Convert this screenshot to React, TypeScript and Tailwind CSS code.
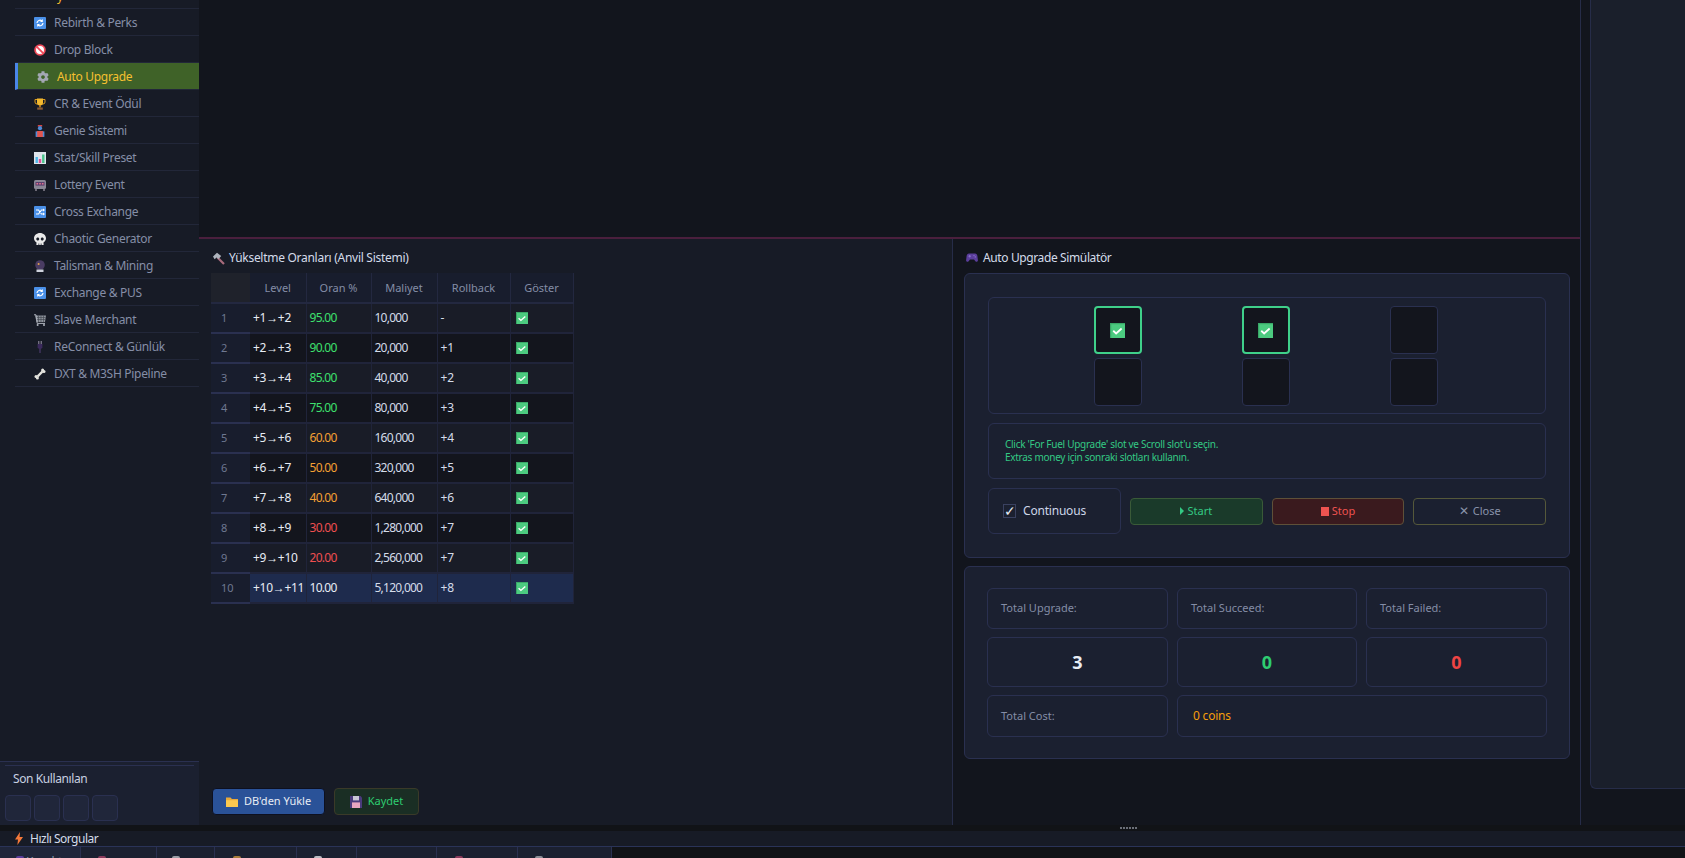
import React from 'react'
import { FaCog, FaSkull } from 'react-icons/fa'

type IconProps = { className?: string }

const CheckBox = ({ className = 'h-3 w-3' }: IconProps) => (
  <svg viewBox="0 0 12 12" className={className}>
    <rect width="12" height="12" fill="#4ccb80" />
    <path d="M0 0h12v1H1v11H0z" fill="#3aa868" />
    <path d="M2.6 6.2l2.3 2.2 4.4-4" fill="none" stroke="#fff" strokeWidth="1.4" />
  </svg>
)

const BlueArrows = () => (
  <svg viewBox="0 0 12 12" className="h-3 w-3">
    <rect width="12" height="12" rx="1" fill="#4a90e8" />
    <path d="M3 6a3 3 0 0 1 5-2M9 6a3 3 0 0 1-5 2" fill="none" stroke="#fff" strokeWidth="1.2" />
    <path d="M8.8 2v3H6zM3.2 10V7H6z" fill="#fff" />
  </svg>
)

const Shuffle = () => (
  <svg viewBox="0 0 12 12" className="h-3 w-3">
    <rect width="12" height="12" rx="1" fill="#4a90e8" />
    <path d="M2 4h2.5l3 4H9M2 8h2.5l3-4H9" fill="none" stroke="#fff" strokeWidth="1.1" />
    <path d="M9 2.5L11 4 9 5.5zM9 6.5L11 8 9 9.5z" fill="#fff" />
  </svg>
)

const NoEntry = () => (
  <svg viewBox="0 0 12 12" className="h-3 w-3">
    <circle cx="6" cy="6" r="4.9" fill="#fff" stroke="#ef4a5a" strokeWidth="1.8" />
    <path d="M2.6 2.6l6.8 6.8" stroke="#ef4a5a" strokeWidth="1.8" />
  </svg>
)

const Trophy = () => (
  <svg viewBox="0 0 12 12" className="h-3 w-3">
    <path d="M1 1.5h10V4a2 2 0 0 1-2 2H3a2 2 0 0 1-2-2z" fill="none" stroke="#d99a1e" strokeWidth="1" />
    <path d="M3 .5h6v4a3 3 0 0 1-6 0z" fill="#f3b92f" />
    <rect x="5.2" y="7" width="1.6" height="2.5" fill="#c98a1e" />
    <rect x="3.2" y="9.5" width="5.6" height="2.2" fill="#8a5a34" />
  </svg>
)

const Genie = () => (
  <svg viewBox="0 0 12 12" className="h-3 w-3">
    <rect x="3.8" y="0" width="4.4" height="1.6" fill="#d8433f" />
    <circle cx="6" cy="3.2" r="2.1" fill="#4f8bd8" />
    <path d="M3 6h6l1 6H2z" fill="#e0544e" />
    <rect x="1.6" y="6.4" width="1.6" height="5.4" fill="#4f8bd8" />
    <rect x="8.8" y="6.4" width="1.6" height="5.4" fill="#4f8bd8" />
  </svg>
)

const Stats = () => (
  <svg viewBox="0 0 12 12" className="h-3 w-3">
    <rect width="12" height="12" fill="#dfe4ec" />
    <rect x="1.5" y="5" width="2.4" height="6" fill="#4fb7e8" />
    <rect x="4.8" y="7" width="2.4" height="4" fill="#e0509a" />
    <rect x="8.1" y="2.5" width="2.4" height="8.5" fill="#49c48a" />
  </svg>
)

const Slots = () => (
  <svg viewBox="0 0 12 12" className="h-3 w-3">
    <rect y="1" width="12" height="9" rx="1.5" fill="#8a8796" />
    <rect x="1.5" y="3" width="9" height="3.6" fill="#5a3f6e" />
    <path d="M2.5 4h1.6v1.4H2.5zM5.2 4h1.6v1.4H5.2zM7.9 4h1.6v1.4H7.9z" fill="#e3738f" />
    <rect x="1" y="10" width="2" height="2" fill="#6b6875" />
    <rect x="9" y="10" width="2" height="2" fill="#6b6875" />
  </svg>
)

const Ball = () => (
  <svg viewBox="0 0 12 12" className="h-3 w-3">
    <circle cx="6" cy="5" r="4.8" fill="#4a3c63" />
    <circle cx="4.6" cy="4" r="1" fill="#e3a34a" />
    <path d="M2.5 9.5h7V12h-7z" fill="#cfd3dc" />
  </svg>
)

const Cart = () => (
  <svg viewBox="0 0 13 12" className="h-3 w-[13px]">
    <path d="M1 1.5h11l-1 6.5H2.5z" fill="#8d929b" />
    <path d="M1.5 3.5h10M2 5.5h9M4.5 1.5v6.5M7 1.5v6.5M9.5 1.5v6.5" stroke="#3b3f4a" strokeWidth=".6" />
    <path d="M0 .8h2l1.2 8.6H11" fill="none" stroke="#aeb3bc" strokeWidth="1" />
    <circle cx="3.6" cy="11" r="1" fill="#aeb3bc" />
    <circle cx="10" cy="11" r="1" fill="#aeb3bc" />
  </svg>
)

const Plug = () => (
  <svg viewBox="0 0 12 12" className="h-3 w-3">
    <rect x="4.3" y="0" width="1" height="3" fill="#9a93a8" />
    <rect x="6.7" y="0" width="1" height="3" fill="#9a93a8" />
    <path d="M3.6 3h4.8v3.4L7 8H5L3.6 6.4z" fill="#3b2a5c" />
    <rect x="5.4" y="8" width="1.2" height="4" fill="#4a3a6b" />
  </svg>
)

const Bone = () => (
  <svg viewBox="0 0 12 12" className="h-3 w-3">
    <path d="M3.4 8.6l5.2-5.2" stroke="#e4e4de" strokeWidth="2.2" />
    <circle cx="2" cy="8.6" r="1.5" fill="#e4e4de" />
    <circle cx="3.4" cy="10" r="1.5" fill="#e4e4de" />
    <circle cx="8.6" cy="2" r="1.5" fill="#e4e4de" />
    <circle cx="10" cy="3.4" r="1.5" fill="#e4e4de" />
  </svg>
)

const Hammer = () => (
  <svg viewBox="0 0 13 13" className="h-[13px] w-[13px]">
    <path d="M5.5 5.5l6.5 6.5" stroke="#a86b7c" strokeWidth="2.2" />
    <path d="M1 4.5L5 .8l4.2 3.2-2.6 3-2-1.4-2 1.6z" fill="#aeb4bd" />
  </svg>
)

const Gamepad = () => (
  <svg viewBox="0 0 12 10" className="h-[10px] w-3">
    <path d="M3 .5h6c1.4 0 2.1.9 2.4 2.4l.5 4.3c.1 1.6-1.5 2.2-2.5 1L8 6.4H4L2.6 8.2c-1 1.2-2.6.6-2.5-1l.5-4.3C.9 1.4 1.6.5 3 .5z" fill="#5b3e9c" />
    <path d="M2.4 3.2h2.6M3.7 2v2.5" stroke="#8f78cf" strokeWidth=".8" />
    <circle cx="8" cy="2.6" r=".7" fill="#8f78cf" />
    <circle cx="9.3" cy="3.9" r=".7" fill="#8f78cf" />
  </svg>
)

const Folder = () => (
  <svg viewBox="0 0 12 12" className="h-3 w-3">
    <path d="M0 1.5h4.5L6 3h6v8H0z" fill="#e8a93a" />
    <path d="M0 4.2h12V11H0z" fill="#fcc94f" />
  </svg>
)

const Floppy = () => (
  <svg viewBox="0 0 12 12" className="h-3 w-3">
    <path d="M0 0h10.5L12 1.5V12H0z" fill="#4a3a7c" />
    <rect x="3" y="0" width="6" height="4.4" fill="#c9c6d6" />
    <rect x="2" y="6.4" width="8" height="5.6" fill="#e8a5c0" />
  </svg>
)

const Bolt = () => (
  <svg viewBox="0 0 8 13" className="h-[13px] w-2">
    <path d="M5 0L0 7.4h3L2.4 13 8 5H4.6z" fill="#f5793a" />
  </svg>
)

const navItems: { label: string; icon: React.ReactNode }[] = [
  { label: 'Rebirth & Perks', icon: <BlueArrows /> },
  { label: 'Drop Block', icon: <NoEntry /> },
  { label: 'Auto Upgrade', icon: <FaCog className="h-3 w-3 text-[#a3a7b2]" /> },
  { label: 'CR & Event Ödül', icon: <Trophy /> },
  { label: 'Genie Sistemi', icon: <Genie /> },
  { label: 'Stat/Skill Preset', icon: <Stats /> },
  { label: 'Lottery Event', icon: <Slots /> },
  { label: 'Cross Exchange', icon: <Shuffle /> },
  { label: 'Chaotic Generator', icon: <FaSkull className="h-3 w-3 text-[#e9e9e9]" /> },
  { label: 'Talisman & Mining', icon: <Ball /> },
  { label: 'Exchange & PUS', icon: <BlueArrows /> },
  { label: 'Slave Merchant', icon: <Cart /> },
  { label: 'ReConnect & Günlük', icon: <Plug /> },
  { label: 'DXT & M3SH Pipeline', icon: <Bone /> },
]

const rows = [
  { level: '+1→+2', rate: 95, cost: '10,000', back: '-' },
  { level: '+2→+3', rate: 90, cost: '20,000', back: '+1' },
  { level: '+3→+4', rate: 85, cost: '40,000', back: '+2' },
  { level: '+4→+5', rate: 75, cost: '80,000', back: '+3' },
  { level: '+5→+6', rate: 60, cost: '160,000', back: '+4' },
  { level: '+6→+7', rate: 50, cost: '320,000', back: '+5' },
  { level: '+7→+8', rate: 40, cost: '640,000', back: '+6' },
  { level: '+8→+9', rate: 30, cost: '1,280,000', back: '+7' },
  { level: '+9→+10', rate: 20, cost: '2,560,000', back: '+7' },
  { level: '+10→+11', rate: 10, cost: '5,120,000', back: '+8' },
]

const tabs = [
  { cls: 'w-[81px] pl-[16px] bg-[#20263a]', icon: 'bg-[#5b3e9c]', text: 'Karakter' },
  { cls: 'w-[76px] pl-[17px]', icon: 'bg-[#8a3a5c]', text: '' },
  { cls: 'w-[58px] pl-[15px]', icon: 'bg-[#9a9da6]', text: '' },
  { cls: 'w-[82px] pl-[18px]', icon: 'bg-[#a87c3a]', text: '' },
  { cls: 'w-[60px] pl-[17px]', icon: 'bg-[#b9bbc2]', text: '' },
  { cls: 'w-[80px] pl-[17px]', icon: 'bg-transparent', text: '' },
  { cls: 'w-[81px] pl-[18px]', icon: 'bg-[#8a3a5c]', text: '' },
  { cls: 'w-[94px] pl-[17px]', icon: 'bg-[#8a8d96]', text: '' },
]

function rateColor(rate: number) {
  if (rate >= 70) return 'text-[#3ee06e]'
  if (rate >= 40) return 'text-[#f5a033]'
  if (rate >= 20) return 'text-[#ef4f50]'
  return 'text-[#e8edf5]'
}

const Sidebar = () => (
  <aside className="flex w-[199px] shrink-0 flex-col bg-[#171b26]">
    <div className="ml-[15px] flex h-[9px] items-end overflow-hidden border-b border-[#222739] pb-[5px]">
      <span className="ml-[5px] h-[2px] w-[13px] self-start -translate-y-[5px] bg-[#3f2a6e]" />
      <span className="ml-[24px] text-xs leading-[12px] text-[#f5b82e]">y</span>
    </div>
    <nav className="flex-1">
      {navItems.map(item => {
        const active = item.label === 'Auto Upgrade'
        return (
          <div
            key={item.label}
            className={`ml-[15px] flex h-[27px] items-center border-b border-[#222739] pt-[2px] text-xs tracking-[-0.3px] ${
              active
                ? 'border-l-[3px] border-l-[#4a86e8] bg-[#3f6228] pl-[19px] text-[#f5c030]'
                : 'pl-[19px] text-[#858ea6]'
            }`}
          >
            <span className="flex w-[20px] shrink-0 items-center">{item.icon}</span>
            {item.label}
          </div>
        )
      })}
    </nav>
    <div className="h-[64px] border-t border-[#2a3050] bg-[#1b2030] pt-[3px]">
      <div className="mx-[5px] border-t border-[#2a3050]" />
      <div className="mt-[4px] pl-[13px] text-xs leading-[18px] tracking-[-0.4px] text-[#c8d0e0]">Son Kullanılan</div>
      <div className="mt-[7px] flex gap-[3px] pl-[5px]">
        {[0, 1, 2, 3].map(i => (
          <div key={i} className="h-[26px] w-[26px] rounded border border-[#2a3050] bg-[#20263a]" />
        ))}
      </div>
    </div>
  </aside>
)

const RateTable = () => {
  const th = 'border-r border-b-2 border-[#232840] bg-[#181d2d] pt-[2px] text-center text-[11px] font-normal text-[#848da6]'
  const td = 'border-r border-b-2 border-[#20243a] pl-[3px] text-xs'
  return (
    <table className="w-[362px] table-fixed border-collapse">
      <colgroup>
        <col className="w-[39px]" />
        <col className="w-[56px]" />
        <col className="w-[65px]" />
        <col className="w-[66px]" />
        <col className="w-[73px]" />
        <col className="w-[63px]" />
      </colgroup>
      <thead>
        <tr className="h-[30px]">
          <th className="border-b-2 border-[#232840] bg-[#1f222b]" />
          {['Level', 'Oran %', 'Maliyet', 'Rollback', 'Göster'].map(h => (
            <th key={h} className={th}>{h}</th>
          ))}
        </tr>
      </thead>
      <tbody>
        {rows.map((r, i) => {
          const selected = i === rows.length - 1
          const bg = selected ? 'bg-[#1e2b4d]' : i % 2 === 0 ? 'bg-[#191c27]' : 'bg-[#13151d]'
          return (
            <tr key={r.level} className={`h-[30px] ${bg}`}>
              <td className="border-b-2 border-[#2a3050] bg-[#181d2d] pl-[10px] text-[11px] text-[#6f7891]">{i + 1}</td>
              <td className={`${td} tracking-[-0.3px] text-[#e8edf5]`}>{r.level}</td>
              <td className={`${td} tracking-[-0.7px] ${rateColor(r.rate)}`}>{r.rate.toFixed(2)}</td>
              <td className={`${td} tracking-[-0.75px] text-[#d4dcea]`}>{r.cost}</td>
              <td className={`${td} text-[#d4dcea]`}>{r.back}</td>
              <td className={`${td} pl-[5px]`}><CheckBox /></td>
            </tr>
          )
        })}
      </tbody>
    </table>
  )
}

const Slot = ({ on }: { on?: boolean }) => (
  <div
    className={`flex h-[48px] w-[48px] items-center justify-center rounded bg-[#13151d] ${
      on ? 'border-2 border-[#3fd08a]' : 'border border-[#2a3050]'
    }`}
  >
    {on && <CheckBox className="h-[15px] w-[15px]" />}
  </div>
)

const Stat = ({ className = '', children }: { className?: string; children: React.ReactNode }) => (
  <div className={`flex items-center rounded-md border border-[#2a3050] ${className}`}>{children}</div>
)

const Simulator = () => (
  <section className="flex flex-1 flex-col border-l border-[#262c48] bg-[#12151d] px-[11px]">
    <h2 className="flex h-[34px] items-center gap-[5px] pt-[4px] pl-[2px] text-xs font-normal tracking-[-0.38px] text-[#d4dcea]">
      <Gamepad />
      Auto Upgrade Simülatör
    </h2>

    <div className="flex h-[285px] flex-col gap-[9px] rounded-md border border-[#2a3050] bg-[#1b2030] px-[23px] pt-[23px]">
      <div className="grid h-[117px] grid-cols-[148px_148px_148px] grid-rows-[48px_48px] justify-center justify-items-center gap-y-[4px] rounded-md border border-[#2a3050] pt-[8px] pr-[3px]">
        <Slot on />
        <Slot on />
        <Slot />
        <Slot />
        <Slot />
        <Slot />
      </div>
      <div className="flex h-[56px] flex-col justify-center rounded-md border border-[#2a3050] pl-[16px] text-[10px] leading-[13px] tracking-[-0.28px] text-[#34c984]">
        <div>Click 'For Fuel Upgrade' slot ve Scroll slot'u seçin.</div>
        <div>Extras money için sonraki slotları kullanın.</div>
      </div>
      <div className="flex h-[46px] items-center gap-[9px]">
        <label className="flex h-[46px] w-[133px] shrink-0 items-center gap-[7px] rounded-md border border-[#2a3050] pl-[14px] text-xs tracking-[-0.2px] text-[#cdd6e8]">
          <span className="flex h-[14px] w-[13px] items-center justify-center border border-[#3a4160] text-sm leading-none text-[#e8edf5]">✓</span>
          Continuous
        </label>
        <button className="flex h-[27px] flex-1 items-center justify-center gap-[3px] rounded border border-[#3a5a38] bg-[#1a3a2a] text-[11px] text-[#34c984]">
          <span className="h-0 w-0 border-y-[4px] border-l-[4px] border-y-transparent border-l-[#34c984]" />
          Start
        </button>
        <button className="flex h-[27px] flex-1 items-center justify-center gap-[3px] rounded border border-[#5e5038] bg-[#3a1a1e] text-[11px] text-[#ef5350]">
          <span className="h-[9px] w-[8px] bg-[#ef5350]" />
          Stop
        </button>
        <button className="flex h-[27px] flex-1 items-center justify-center gap-[4px] rounded border border-[#55583a] bg-[#1b2030] text-[11px] text-[#8a93ab]">
          <span className="text-xs leading-none">✕</span>
          Close
        </button>
      </div>
    </div>

    <div className="mt-[8px] grid h-[193px] grid-cols-[181px_180px_181px] grid-rows-[41px_50px_42px] gap-x-[9px] gap-y-[8px] rounded-md border border-[#2a3050] bg-[#1b2030] px-[22px] pt-[21px]">
      <Stat className="pl-[13px] text-[11px] text-[#848da6]">Total Upgrade:</Stat>
      <Stat className="pl-[13px] text-[11px] text-[#848da6]">Total Succeed:</Stat>
      <Stat className="pl-[13px] text-[11px] text-[#848da6]">Total Failed:</Stat>
      <Stat className="justify-center text-lg font-bold text-[#e8edf5]">3</Stat>
      <Stat className="justify-center text-lg font-bold text-[#2ecc71]">0</Stat>
      <Stat className="justify-center text-lg font-bold text-[#ef4444]">0</Stat>
      <Stat className="pl-[13px] text-[11px] text-[#848da6]">Total Cost:</Stat>
      <Stat className="col-span-2 pl-[15px] text-xs tracking-[-0.2px] text-[#f59e0b]">0 coins</Stat>
    </div>
  </section>
)

export default function App() {
  return (
    <div className="flex h-[858px] w-[1685px] flex-col overflow-hidden bg-[#111317] [font-family:'Noto_Sans',sans-serif]">
      <div className="flex h-[825px] shrink-0">
        <Sidebar />
        <main className="flex w-[1381px] shrink-0 flex-col">
          <div className="h-[239px] shrink-0 border-b-2 border-[#4a1f3d] bg-[#12151d]" />
          <div className="flex flex-1">
            <section className="flex w-[753px] shrink-0 flex-col bg-[#171b26] pl-[12px]">
              <h2 className="flex h-[34px] items-center gap-[4px] pt-[4px] pl-[1px] text-xs font-normal tracking-[-0.28px] text-[#d4dcea]">
                <Hammer />
                Yükseltme Oranları (Anvil Sistemi)
              </h2>
              <RateTable />
              <div className="mt-auto mb-[10px] flex gap-[9px] pl-[1px]">
                <button className="flex h-[27px] w-[113px] items-center justify-center gap-[6px] rounded border border-[#0d1020] bg-[#2a5298] text-[11px] text-[#e8edf5]">
                  <Folder />
                  DB'den Yükle
                </button>
                <button className="flex h-[27px] w-[85px] items-center justify-center gap-[6px] rounded border border-[#3a3a28] bg-[#1a2e24] text-[11px] text-[#2ecc71]">
                  <Floppy />
                  Kaydet
                </button>
              </div>
            </section>
            <Simulator />
          </div>
        </main>
        <div className="flex-1 border-l border-[#262c48] bg-[#12151d] pb-[36px] pl-[9px]">
          <div className="h-full rounded-bl-md border-b border-l border-[#262c48] bg-[#1a1f2b]" />
        </div>
      </div>

      <div className="flex h-[6px] shrink-0 items-center pl-[1120px]">
        <div className="flex gap-[1px]">
          {[0, 1, 2, 3, 4, 5].map(i => (
            <span key={i} className="h-[2px] w-[2px] bg-[#6b6f78]" />
          ))}
        </div>
      </div>

      <div className="flex h-[16px] shrink-0 items-center gap-[7px] border-b border-[#2a3358] bg-[#171b26] pl-[15px] text-xs leading-none tracking-[-0.5px] text-[#d4dcea]">
        <Bolt />
        Hızlı Sorgular
      </div>

      <div className="flex h-[11px] overflow-hidden">
        {tabs.map((t, i) => (
          <div key={i} className={`flex shrink-0 gap-[2px] border-r border-[#2a3050] bg-[#1b2030] pt-[9px] ${t.cls}`}>
            <span className={`h-[2px] w-[8px] rounded-t-sm ${t.icon}`} />
            {t.text && <span className="text-xs leading-[12px] text-[#8a93ab]">{t.text}</span>}
          </div>
        ))}
      </div>
    </div>
  )
}
